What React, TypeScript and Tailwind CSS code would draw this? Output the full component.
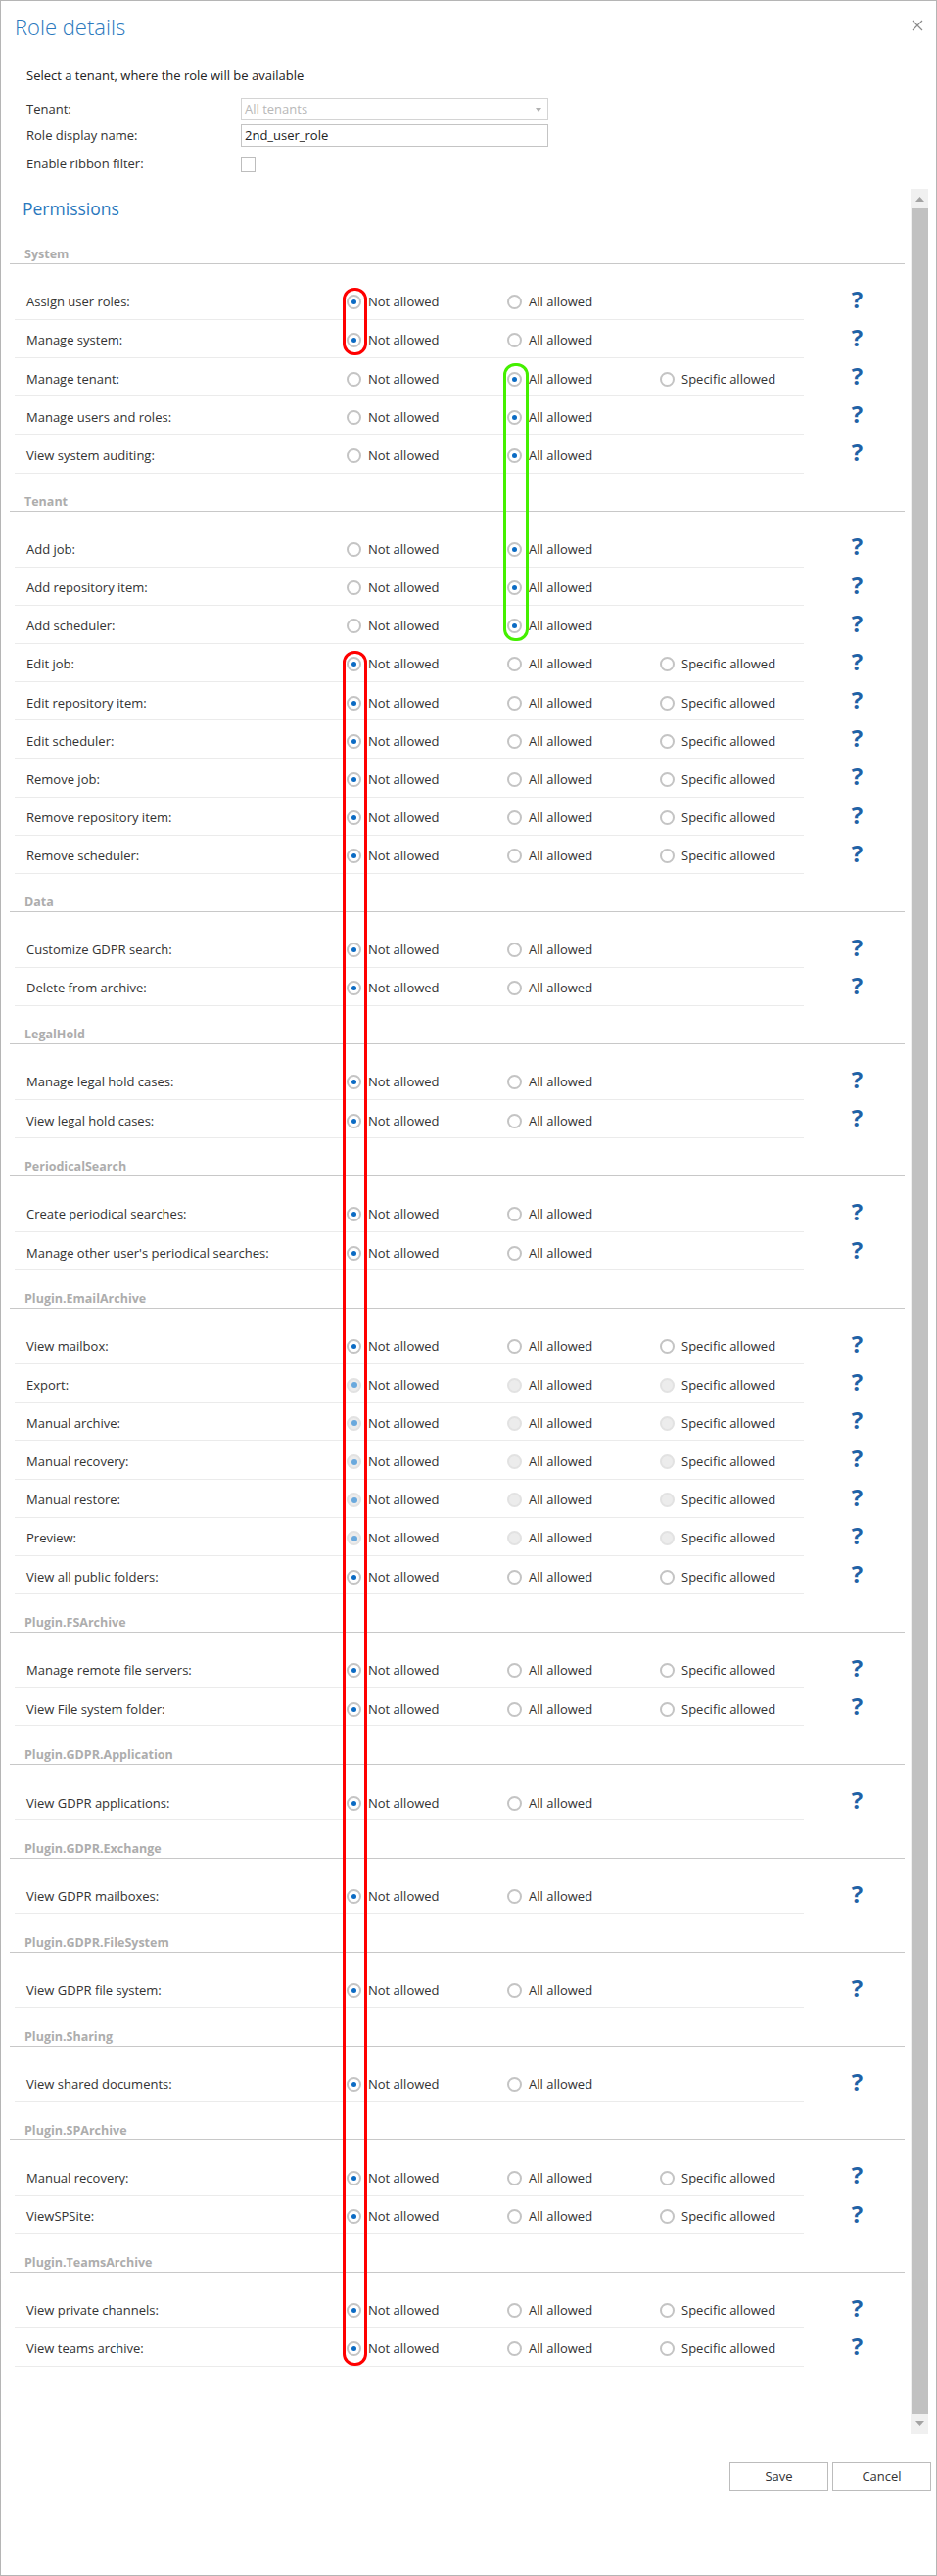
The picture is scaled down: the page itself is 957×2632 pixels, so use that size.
import React from "react";

type Row = { label: string; three?: boolean; sel: number; disabled?: boolean };
type Section = { name: string; rows: Row[] };

const sections: Section[] = [
  {
    name: "System",
    rows: [
      { label: "Assign user roles:", sel: 0 },
      { label: "Manage system:", sel: 0 },
      { label: "Manage tenant:", sel: 1, three: true },
      { label: "Manage users and roles:", sel: 1 },
      { label: "View system auditing:", sel: 1 },
    ],
  },
  {
    name: "Tenant",
    rows: [
      { label: "Add job:", sel: 1 },
      { label: "Add repository item:", sel: 1 },
      { label: "Add scheduler:", sel: 1 },
      { label: "Edit job:", sel: 0, three: true },
      { label: "Edit repository item:", sel: 0, three: true },
      { label: "Edit scheduler:", sel: 0, three: true },
      { label: "Remove job:", sel: 0, three: true },
      { label: "Remove repository item:", sel: 0, three: true },
      { label: "Remove scheduler:", sel: 0, three: true },
    ],
  },
  {
    name: "Data",
    rows: [
      { label: "Customize GDPR search:", sel: 0 },
      { label: "Delete from archive:", sel: 0 },
    ],
  },
  {
    name: "LegalHold",
    rows: [
      { label: "Manage legal hold cases:", sel: 0 },
      { label: "View legal hold cases:", sel: 0 },
    ],
  },
  {
    name: "PeriodicalSearch",
    rows: [
      { label: "Create periodical searches:", sel: 0 },
      { label: "Manage other user's periodical searches:", sel: 0 },
    ],
  },
  {
    name: "Plugin.EmailArchive",
    rows: [
      { label: "View mailbox:", sel: 0, three: true },
      { label: "Export:", sel: 0, three: true, disabled: true },
      { label: "Manual archive:", sel: 0, three: true, disabled: true },
      { label: "Manual recovery:", sel: 0, three: true, disabled: true },
      { label: "Manual restore:", sel: 0, three: true, disabled: true },
      { label: "Preview:", sel: 0, three: true, disabled: true },
      { label: "View all public folders:", sel: 0, three: true },
    ],
  },
  {
    name: "Plugin.FSArchive",
    rows: [
      { label: "Manage remote file servers:", sel: 0, three: true },
      { label: "View File system folder:", sel: 0, three: true },
    ],
  },
  { name: "Plugin.GDPR.Application", rows: [{ label: "View GDPR applications:", sel: 0 }] },
  { name: "Plugin.GDPR.Exchange", rows: [{ label: "View GDPR mailboxes:", sel: 0 }] },
  { name: "Plugin.GDPR.FileSystem", rows: [{ label: "View GDPR file system:", sel: 0 }] },
  { name: "Plugin.Sharing", rows: [{ label: "View shared documents:", sel: 0 }] },
  {
    name: "Plugin.SPArchive",
    rows: [
      { label: "Manual recovery:", sel: 0, three: true },
      { label: "ViewSPSite:", sel: 0, three: true },
    ],
  },
  {
    name: "Plugin.TeamsArchive",
    rows: [
      { label: "View private channels:", sel: 0, three: true },
      { label: "View teams archive:", sel: 0, three: true },
    ],
  },
];

function Radio({ checked, disabled }: { checked: boolean; disabled?: boolean }) {
  if (disabled) {
    return (
      <span className="flex h-[15px] w-[15px] shrink-0 items-center justify-center rounded-full border-2 border-[#e2e2e2] bg-[#ececec]">
        {checked && <span className="h-[6px] w-[6px] rounded-full bg-[#6aa9dd]" />}
      </span>
    );
  }
  return (
    <span className="flex h-[15px] w-[15px] shrink-0 items-center justify-center rounded-full border-2 border-[#c4c4c4] bg-white">
      {checked && <span className="h-[5px] w-[5px] rounded-full bg-[#0b6bc4]" />}
    </span>
  );
}

function Option({ text, checked, disabled, width }: { text: string; checked: boolean; disabled?: boolean; width: string }) {
  return (
    <div className={"flex items-center " + width}>
      <Radio checked={checked} disabled={disabled} />
      <span className="ml-[7px] whitespace-nowrap">{text}</span>
    </div>
  );
}

function PermRow({ row }: { row: Row }) {
  return (
    <div className="flex">
      <div className="ml-[5px] flex h-[39.2px] w-[813px] items-center border-b border-[#ebebeb] pt-[4px] text-[#333]">
        <div className="w-[339px] shrink-0 whitespace-nowrap pl-[12px]">{row.label}</div>
        <Option text="Not allowed" checked={row.sel === 0} disabled={row.disabled} width="w-[164px]" />
        <Option text="All allowed" checked={row.sel === 1} disabled={row.disabled} width="w-[156px]" />
        {row.three && <Option text="Specific allowed" checked={row.sel === 2} disabled={row.disabled} width="w-[130px]" />}
      </div>
      <div className="flex h-[39.2px] w-[104px] justify-center pl-[6px] pt-[3px]">
        <span className="text-[24px] font-bold leading-[30px] text-[#1f62a6]">?</span>
      </div>
    </div>
  );
}

function SectionBlock({ s }: { s: Section }) {
  return (
    <div>
      <div className="flex h-[39px] items-end border-b border-[#c8c8c8] pb-[1px] pl-[15px]">
        <span className="text-[12.5px] font-bold leading-[16px] text-[#adadad]">{s.name}</span>
      </div>
      <div className="h-[17.7px]" />
      {s.rows.map((r, i) => (
        <PermRow key={i} row={r} />
      ))}
    </div>
  );
}

export default function App() {
  const font = { fontFamily: '"Open Sans", "Noto Sans", sans-serif' };
  return (
    <div className="relative h-[2632px] w-[957px] border border-[#b5b5b5] bg-white text-[13px] leading-[19px] text-[#333]" style={font}>
      {/* header */}
      <div className="flex items-start justify-between pl-[14px] pr-[13px] pt-[11px]">
        <h1 className="text-[22px] font-light leading-[30px] text-[#2a78bd]">Role details</h1>
        <svg width="12" height="12" viewBox="0 0 12 12" className="mt-[8px]">
          <path d="M1 1 L11 11 M11 1 L1 11" stroke="#8a8a8a" strokeWidth="1.2" fill="none" />
        </svg>
      </div>
      <div className="mt-[26px] pl-[26px] leading-[18px] text-[#222]">Select a tenant, where the role will be available</div>

      <div className="mt-[14px] flex flex-col pl-[26px]">
        <div className="flex items-center">
          <div className="w-[219px]">Tenant:</div>
          <div className="flex h-[23px] w-[314px] items-center justify-between border border-[#d4d4d4] pl-[3px] pr-[6px] text-[#b8b8b8]">
            <span>All tenants</span>
            <svg width="6" height="4" viewBox="0 0 6 4">
              <path d="M0 0 L6 0 L3 4 Z" fill="#b0b0b0" />
            </svg>
          </div>
        </div>
        <div className="mt-[4px] flex items-center">
          <div className="w-[219px]">Role display name:</div>
          <div className="flex h-[23px] w-[314px] items-center border border-[#c4c4c4] pl-[3px] text-[#222]">2nd_user_role</div>
        </div>
        <div className="mt-[9px] flex h-[17px] items-center">
          <div className="w-[219px]">Enable ribbon filter:</div>
          <div className="h-[16px] w-[15px] border-[1.5px] border-[#bdbdbd] bg-white" />
        </div>
      </div>

      {/* scroll region */}
      <div className="mt-[17px] flex h-[2294px] pl-[9px]">
        <div className="w-[914px]">
          <div className="h-[38px] pl-[13px] pt-[8px]">
            <span className="text-[17.5px] leading-[24px] text-[#2a78bd]">Permissions</span>
          </div>
          {sections.map((s) => (
            <SectionBlock key={s.name} s={s} />
          ))}
        </div>
        <div className="ml-[6px] flex w-[18px] flex-col bg-[#f0f0f0]">
          <div className="flex h-[20px] items-center justify-center">
            <svg width="9" height="5" viewBox="0 0 9 5">
              <path d="M0 5 L9 5 L4.5 0 Z" fill="#a3a3a3" />
            </svg>
          </div>
          <div className="ml-[1px] flex-1 bg-[#c1c1c1]" />
          <div className="flex h-[21px] items-center justify-center">
            <svg width="9" height="5" viewBox="0 0 9 5">
              <path d="M0 0 L9 0 L4.5 5 Z" fill="#a3a3a3" />
            </svg>
          </div>
        </div>
      </div>

      {/* buttons */}
      <div className="mt-[29px] flex justify-end gap-[4px] pr-[5px]">
        <button className="h-[29px] w-[101px] border border-[#bcbcbc] bg-white text-[13px] text-[#333]">Save</button>
        <button className="h-[29px] w-[101px] border border-[#bcbcbc] bg-white text-[13px] text-[#333]">Cancel</button>
      </div>

      {/* annotation overlays */}
      <div className="pointer-events-none absolute left-[349px] top-[293px] h-[69px] w-[25px] rounded-[12px] border-[3px] border-[#ff0000]" />
      <div className="pointer-events-none absolute left-[513px] top-[370px] h-[284px] w-[26px] rounded-[12px] border-[3px] border-[#44f000]" />
      <div className="pointer-events-none absolute left-[349px] top-[664px] h-[1752px] w-[25px] rounded-[12px] border-[3px] border-[#ff0000]" />
    </div>
  );
}
